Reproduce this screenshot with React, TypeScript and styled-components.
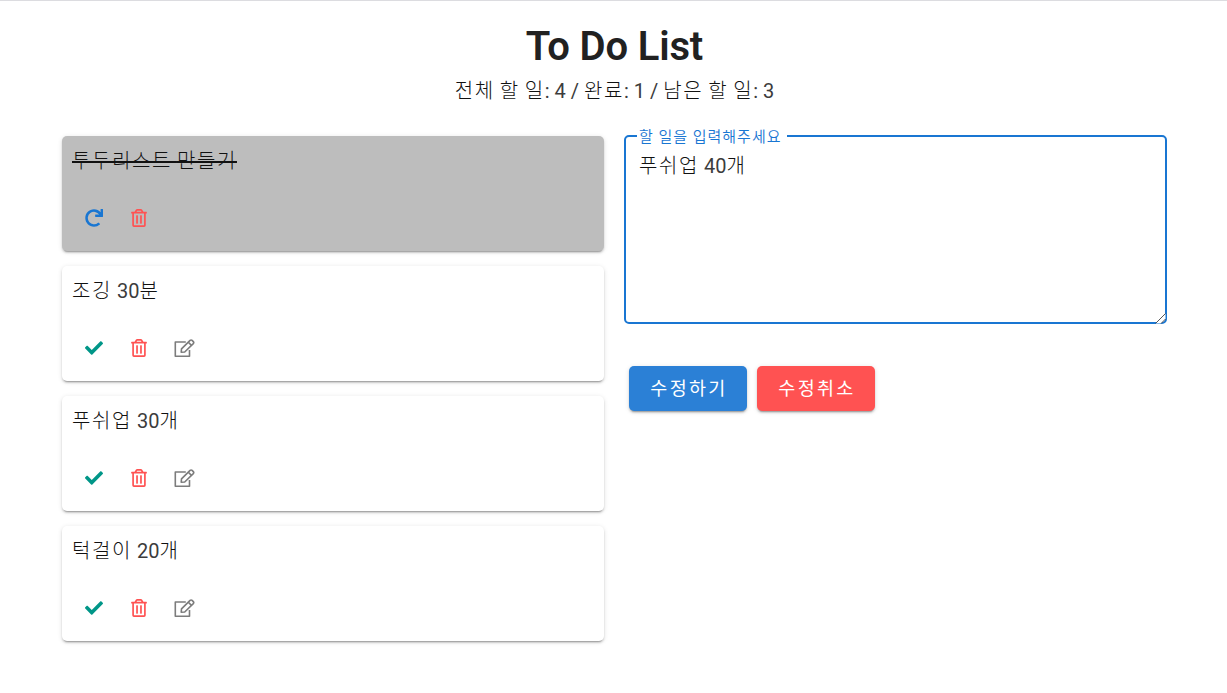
import React, { useState } from 'react';
import styled, { createGlobalStyle, css } from 'styled-components';
import { FaCheck, FaRedo, FaRegTrashAlt } from 'react-icons/fa';

const GlobalStyle = createGlobalStyle`
  *, *::before, *::after {
    box-sizing: border-box;
  }

  body {
    margin: 0;
    background: #fff;
    color: #3c3c3c;
    font-family: Roboto, 'Noto Sans CJK KR', sans-serif;
    font-size: 20px;
    font-weight: 400;
    line-height: 30px;
  }
`;

const Page = styled.main`
  min-height: 693px;
  padding: 25px 60px 0 62px;
  border-top: 1px solid #dcdce0;
`;

const Header = styled.header`
  display: flex;
  flex-direction: column;
  align-items: center;
`;

const Title = styled.h1`
  margin: 0;
  color: #212121;
  font-size: 40px;
  font-weight: 600;
  letter-spacing: -0.15px;
  line-height: 42px;
`;

const Summary = styled.p`
  margin: 8px 0 0;
`;

const Columns = styled.div`
  display: grid;
  grid-template-columns: 542px 543px;
  column-gap: 20px;
  margin-top: 29px;
`;

const List = styled.ul`
  display: flex;
  flex-direction: column;
  gap: 15px;
  margin: 1px 0 0;
  padding: 0;
  list-style: none;
`;

const Card = styled.li<{ $done: boolean }>`
  display: flex;
  flex-direction: column;
  justify-content: space-between;
  height: 115px;
  padding: 10px 10px 10.5px;
  border-radius: 5px;
  background: ${({ $done }) => ($done ? '#bdbdbd' : '#fff')};
  box-shadow:
    0 3px 1px -2px rgba(0, 0, 0, 0.2),
    0 2px 2px 0 rgba(0, 0, 0, 0.14),
    0 1px 5px 0 rgba(0, 0, 0, 0.12);
`;

const Hangul = styled.span<{ $spacing?: number; $weight?: number; $color?: string }>`
  color: ${({ $color = '#111' }) => $color};
  font-weight: ${({ $weight = 300 }) => $weight};
  letter-spacing: ${({ $spacing = 1.6 }) => $spacing}px;
`;

const CardText = styled.div<{ $done: boolean }>`
  align-self: flex-start;
  ${({ $done }) =>
    $done &&
    css`
      text-decoration: line-through #111 2px;
    `}
`;

const Actions = styled.div`
  display: flex;
`;

const IconButton = styled.button<{ $color: string }>`
  display: flex;
  align-items: center;
  justify-content: center;
  width: 45px;
  height: 45px;
  margin-left: -0.5px;
  margin-right: 0.5px;
  padding: 0;
  border: 0;
  background: none;
  color: ${({ $color }) => $color};
  font-size: 18px;
`;

const EditGlyph = styled.svg`
  flex: none;
  width: 21px;
  height: 19px;
  fill: none;
  stroke: currentColor;
  stroke-width: 1.6;
  stroke-linejoin: round;
`;

const Field = styled.fieldset`
  position: relative;
  height: 189px;
  margin: 0;
  padding: 0;
  border: 2px solid #1976d2;
  border-radius: 5px;
`;

const Label = styled.label`
  position: absolute;
  top: -10px;
  left: 11px;
  padding: 0 5px 0 2px;
  background: #fff;
  font-size: 15px;
  line-height: 20px;
  white-space: nowrap;
`;

const Input = styled.div`
  height: 100%;
  padding: 14px 13px;
  overflow: hidden;
  outline: 0;
`;

const Grip = styled.svg`
  position: absolute;
  right: -1px;
  bottom: -2px;
  width: 12px;
  height: 12px;
`;

const Buttons = styled.div`
  display: flex;
  gap: 10px;
  padding: 42px 5px 0;
`;

const Button = styled.button<{ $color: string }>`
  width: 118px;
  height: 45px;
  padding: 0 0 0 2px;
  border: 0;
  border-radius: 5px;
  background: ${({ $color }) => $color};
  color: #fff;
  font: 400 18.5px/30px Roboto, 'Noto Sans CJK KR', sans-serif;
  letter-spacing: 2.3px;
  box-shadow:
    0 3px 1px -2px rgba(0, 0, 0, 0.2),
    0 2px 2px 0 rgba(0, 0, 0, 0.14),
    0 1px 5px 0 rgba(0, 0, 0, 0.12);
`;

type Todo = { text: string; done: boolean };

const initialTodos: Todo[] = [
  { text: '투두리스트 만들기', done: true },
  { text: '조깅 30분', done: false },
  { text: '푸쉬업 30개', done: false },
  { text: '턱걸이 20개', done: false },
];

/** Pencil over an open square. */
const EditIcon = () => (
  <EditGlyph viewBox="0 0 21 19">
    <path d="M11.8 3H1.3v14.3h14.2V11" />
    <path d="M7.2 13.2 7.5 9.9 16.1 1.4Q17.1 .6 18.1 1.4L19.3 2.6Q20.2 3.6 19.3 4.6L10.7 13Z" />
    <path d="M14.3 3.2 17.5 6.4" />
  </EditGlyph>
);

/** Sets Hangul runs in a lighter weight than the digits and punctuation around them. */
const Mixed = ({ text }: { text: string }) => (
  <>
    {text.split(/([가-힣]+)/).map((part, i) =>
      i % 2 ? <Hangul key={i}>{part}</Hangul> : part,
    )}
  </>
);

export default function App() {
  const [todos, setTodos] = useState(initialTodos);
  const done = todos.filter((t) => t.done).length;
  const toggle = (index: number) =>
    setTodos(todos.map((t, i) => (i === index ? { ...t, done: !t.done } : t)));
  const remove = (index: number) => setTodos(todos.filter((_, i) => i !== index));

  return (
    <>
      <GlobalStyle />
      <Page>
        <Header>
          <Title>To Do List</Title>
          <Summary>
            <Mixed text={`전체 할 일: ${todos.length} / 완료: ${done} / 남은 할 일: ${todos.length - done}`} />
          </Summary>
        </Header>
        <Columns>
          <List>
            {todos.map((todo, i) => (
              <Card key={todo.text} $done={todo.done}>
                <CardText $done={todo.done}>
                  <Mixed text={todo.text} />
                </CardText>
                <Actions>
                  <IconButton $color={todo.done ? '#1976d2' : '#009688'} onClick={() => toggle(i)}>
                    {todo.done ? <FaRedo /> : <FaCheck />}
                  </IconButton>
                  <IconButton $color="#ff5252" onClick={() => remove(i)}>
                    <FaRegTrashAlt />
                  </IconButton>
                  {!todo.done && (
                    <IconButton $color="#7c7c7c">
                      <EditIcon />
                    </IconButton>
                  )}
                </Actions>
              </Card>
            ))}
          </List>
          <section>
            <Field>
              <Label>
                <Hangul $spacing={1} $weight={350} $color="#1976d2">할 일을 입력해주세요</Hangul>
              </Label>
              <Input contentEditable suppressContentEditableWarning>
                <Mixed text="푸쉬업 40개" />
              </Input>
              <Grip viewBox="0 0 12 12" fill="none">
                <path d="M1.5 11.5 11.5 1.5 11.5 7 7 11.5Z" fill="#fff" />
                <path d="M1.5 11.5 11.5 1.5M7 11.5 11.5 7" stroke="#444" strokeWidth="0.9" />
              </Grip>
            </Field>
            <Buttons>
              <Button $color="#2b80d6">수정하기</Button>
              <Button $color="#ff5252">수정취소</Button>
            </Buttons>
          </section>
        </Columns>
      </Page>
    </>
  );
}
